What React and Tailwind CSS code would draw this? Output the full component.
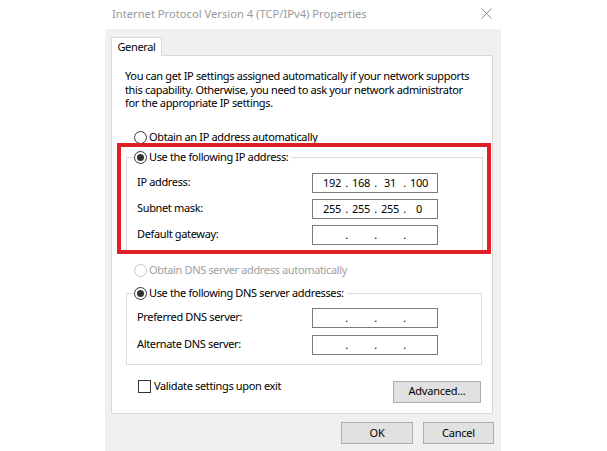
import React from 'react';

const Radio = ({ checked, disabled }) => (
    <span
        className={
            'w-[13px] h-[13px] rounded-full border bg-white flex items-center justify-center shrink-0 ' +
            (disabled ? 'border-[#c4c4c4]' : 'border-[#333333]')
        }
    >
        {checked && <span className="w-[7px] h-[7px] rounded-full bg-[#333333]" />}
    </span>
);

const IpBox = ({ parts = ['', '', '', ''] }) => (
    <div className="w-[126px] h-[20px] border border-[#7a7a7a] bg-white flex items-center pl-[7px] leading-none">
        {parts.map((p, i) => (
            <React.Fragment key={i}>
                <span className="w-[24px] text-center">{p}</span>
                {i < 3 && <span className="w-[5px] text-center">.</span>}
            </React.Fragment>
        ))}
    </div>
);

const Row = ({ label, parts }) => (
    <div className="flex items-center pl-[10px]">
        <span className="w-[175px]">{label}</span>
        <IpBox parts={parts} />
    </div>
);

const Button = ({ children, className }) => (
    <button className={'h-[22px] bg-[#e1e1e1] border border-[#adadad] text-[11px] tracking-[-0.2px] text-black ' + className}>
        {children}
    </button>
);

export default function App() {
    return (
        <div
            className="w-[607px] h-[451px] bg-white relative overflow-hidden text-[11px] text-black whitespace-nowrap"
            style={{ fontFamily: '"Noto Sans", "Open Sans", sans-serif' }}
        >
            <div className="ml-[105px] w-[396px] h-full flex flex-col">
                {/* Title bar */}
                <div className="h-[29px] flex items-center justify-between pl-[7px] pr-[9px] bg-white">
                    <span className="text-[#999999] text-[11.2px]">Internet Protocol Version 4 (TCP/IPv4) Properties</span>
                    <svg width="11" height="11" viewBox="0 0 11 11" className="mb-[2px]">
                        <path d="M0.5 0.5 L10.5 10.5 M10.5 0.5 L0.5 10.5" stroke="#8a8a8a" strokeWidth="1" fill="none" />
                    </svg>
                </div>

                {/* Body */}
                <div className="flex-1 bg-[#f0f0f0] pl-[6px] pt-[8px] tracking-[-0.35px]">
                    <div className="relative z-10 w-[51px] h-[19px] -mb-px border border-b-0 border-[#d9d9d9] bg-white flex items-center justify-center">
                        General
                    </div>
                    <div className="w-[382px] h-[359px] border border-[#d9d9d9] bg-white">
                        <p className="ml-[13px] mt-[13px] leading-[13.5px]">
                            You can get IP settings assigned automatically if your network supports
                            <br />
                            this capability. Otherwise, you need to ask your network administrator
                            <br />
                            for the appropriate IP settings.
                        </p>

                        <div className="ml-[22px] mt-[20px] h-[16px] flex items-center gap-[2px]">
                            <Radio />
                            <span>Obtain an IP address automatically</span>
                        </div>

                        <fieldset className="ml-[14px] mt-[4px] w-[357px] border border-[#dcdcdc] pb-[6px]">
                            <legend className="ml-[7px] pr-[3px]">
                                <span className="h-[16px] flex items-center gap-[2px]">
                                    <Radio checked />
                                    <span>Use the following IP address:</span>
                                </span>
                            </legend>
                            <div className="mt-[7px] flex flex-col gap-[6px]">
                                <Row label="IP address:" parts={['192', '168', '31', '100']} />
                                <Row label="Subnet mask:" parts={['255', '255', '255', '0']} />
                                <Row label="Default gateway:" />
                            </div>
                        </fieldset>

                        <div className="ml-[22px] mt-[11px] h-[16px] flex items-center gap-[2px] text-[#a0a0a0]">
                            <Radio disabled />
                            <span>Obtain DNS server address automatically</span>
                        </div>

                        <fieldset className="ml-[14px] mt-[7px] w-[356px] border border-[#dcdcdc] pb-[9px]">
                            <legend className="ml-[7px] pr-[3px]">
                                <span className="h-[16px] flex items-center gap-[2px]">
                                    <Radio checked />
                                    <span>Use the following DNS server addresses:</span>
                                </span>
                            </legend>
                            <div className="mt-[6px] flex flex-col gap-[7px]">
                                <Row label="Preferred DNS server:" />
                                <Row label="Alternate DNS server:" />
                            </div>
                        </fieldset>

                        <div className="mt-[15px] flex items-start">
                            <label className="ml-[26px] h-[13px] flex items-center gap-[3px]">
                                <span className="w-[13px] h-[13px] border border-[#333333] bg-white shrink-0" />
                                <span>Validate settings upon exit</span>
                            </label>
                            <Button className="ml-auto mr-[11px] mt-[1px] w-[88px]">Advanced...</Button>
                        </div>
                    </div>

                    <div className="mt-[8px] ml-[230px] flex gap-[10px]">
                        <Button className="w-[72px]">OK</Button>
                        <Button className="w-[71px]">Cancel</Button>
                    </div>
                </div>
            </div>

            {/* Red highlight annotation */}
            <div className="absolute left-[117px] top-[143px] w-[374px] h-[111px] border-[4px] border-[#e02027]" />
        </div>
    );
}
